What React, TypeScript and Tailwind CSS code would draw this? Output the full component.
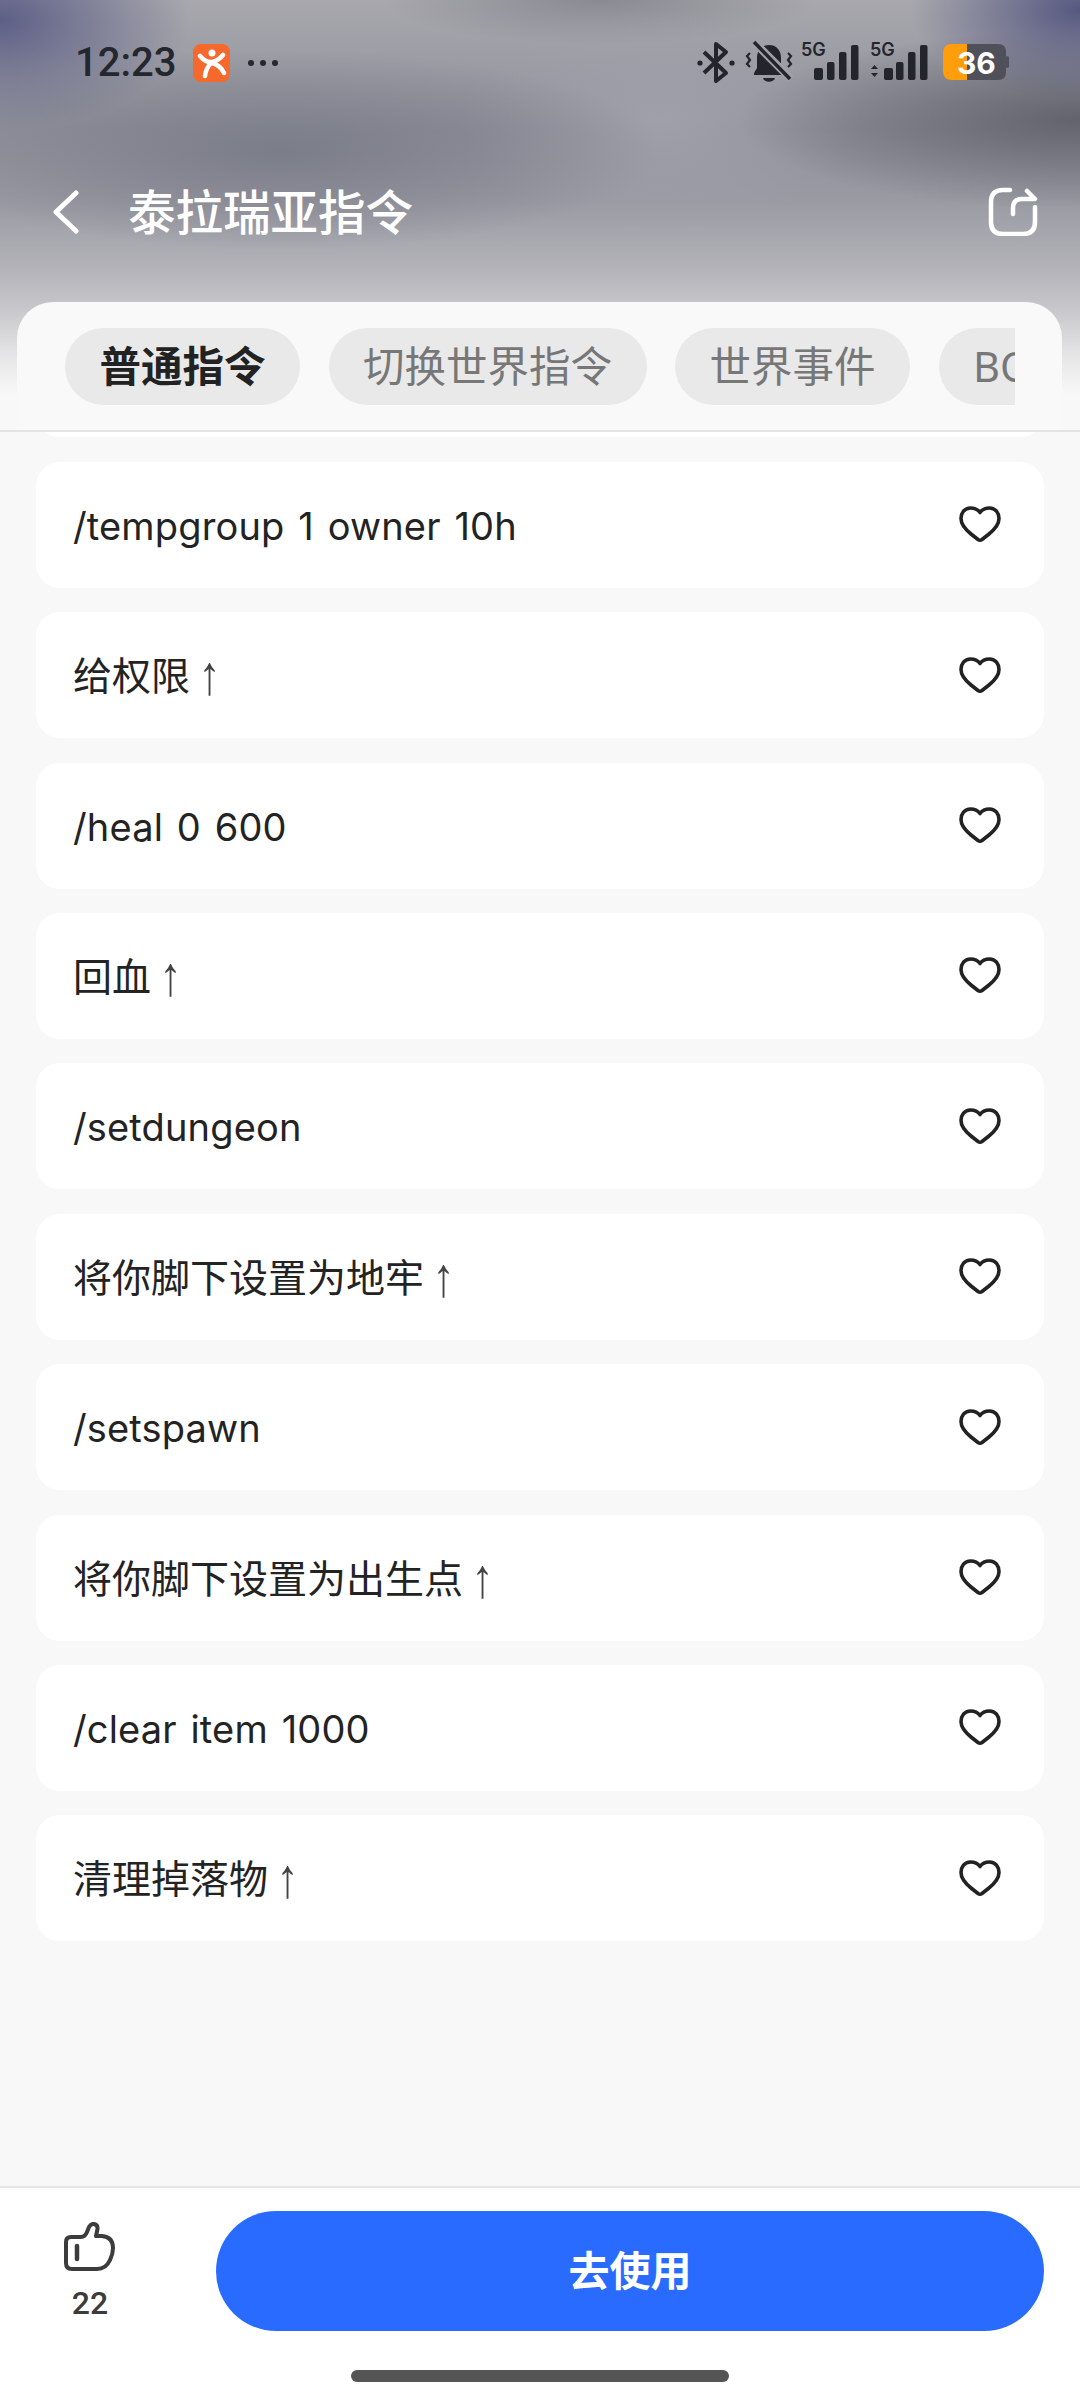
const rows = [
  "/tempgroup 1 owner 10h",
  "给权限",
  "/heal 0 600",
  "回血",
  "/setdungeon",
  "将你脚下设置为地牢",
  "/setspawn",
  "将你脚下设置为出生点",
  "/clear item 1000",
  "清理掉落物",
];

const font = "[font-family:'Noto_Sans','Noto_Sans_CJK_SC',sans-serif]";

function Heart() {
  return (
    <svg width="42" height="37" viewBox="0 0 42 37" fill="none" stroke="#222" strokeWidth="3.6" strokeLinejoin="round">
      <path d="M21 6.5C18.5 3 15 2 11.500 2 5.500 2 2 7 2 12.500 2 18.500 6.500 23.500 12 28l7 5.500q2 1.500 4 0l7-5.500c5.500-4.500 10-9.500 10-15.500C40 7 36.500 2 30.500 2 27 2 23.500 3 21 6.500Z" />
    </svg>
  );
}

function Row({ text }: { text: string }) {
  const latin = text.startsWith("/");
  return (
    <div className="h-[126px] shrink-0 rounded-[24px] bg-white pl-[37px] pr-[43px] flex items-center justify-between">
      {latin ? (
        <span className="mt-[2px] text-[38px] leading-[50px] text-[#232323] tracking-[0.15px] [word-spacing:3px] [font-family:Inter,sans-serif]">{text}</span>
      ) : (
        <span className="text-[39px] leading-[50px] text-[#232323] flex items-center">
          {text}
          <span className="ml-[9px] inline-block scale-x-[1.05] scale-y-[1.32] translate-y-[1px] text-[42px] leading-[50px] text-[#444] font-normal [font-family:'Liberation_Sans',sans-serif]">↑</span>
        </span>
      )}
      <Heart />
    </div>
  );
}

function StatusIcons() {
  const bars = (x: number[]) =>
    x.map((v, i) => {
      const tops = [68, 62, 52, 45];
      return <rect key={v} x={v} y={tops[i]} width={i === 0 ? 9 : 7.500} height={80 - tops[i]} rx="2" fill="#23252c" />;
    });
  return (
    <svg width="320" height="50" viewBox="695 38 320 50">
      <g fill="none" stroke="#23252c" strokeWidth="4" strokeLinejoin="round">
        <path d="M704 52l22 21-10 8V44l10 8-22 21" />
      </g>
      <circle cx="700" cy="63" r="2.600" fill="#23252c" />
      <circle cx="732" cy="63" r="2.600" fill="#23252c" />
      <path d="M769 45c-8 0-12 6-12 13v10l-3 5v2h30v-2l-3-5V58c0-7-4-13-12-13Z" fill="#23252c" />
      <path d="M763 78h12c-1 5-11 5-12 0Z" fill="#23252c" />
      <path d="M753 41l38 38" stroke="#a0a1a8" strokeWidth="8" />
      <path d="M754 42l36 37" stroke="#23252c" strokeWidth="3.500" />
      <path d="M750 53l-3 3 3 4-3 4 3 3M788 53l3 3-3 4 3 4-3 3" fill="none" stroke="#23252c" strokeWidth="2.200" />
      <text x="801" y="56" fontSize="18" fontWeight="600" fontFamily="Inter, sans-serif" fill="#23252c">5G</text>
      {bars([814, 827, 839, 851])}
      <text x="870" y="56" fontSize="18" fontWeight="600" fontFamily="Inter, sans-serif" fill="#23252c">5G</text>
      <path d="M871 69l3.500-4 3.500 4ZM871 73l3.500 4 3.500-4Z" fill="#23252c" />
      {bars([884, 896, 908, 920])}
      <path d="M967 44h31q8 0 8 8v20q0 8-8 8h-31Z" fill="#50505a" />
      <rect x="1006" y="56" width="3" height="12" rx="1.500" fill="#50505a" />
      <path d="M967 44h-15q-9 0-9 9v18q0 9 9 9h15Z" fill="#ff9d0a" />
      <text x="957" y="74" fontSize="30" fontWeight="700" fontFamily="Inter, sans-serif" fill="#fff">36</text>
    </svg>
  );
}

export default function App() {
  return (
    <div className={`${font} w-[1080px] h-[2401px] flex flex-col overflow-hidden bg-[#f8f8f8]`}>
      <header className="h-[432px] shrink-0 flex flex-col border-b-2 border-[#e4e4e4] bg-[radial-gradient(ellipse_190px_110px_at_0px_20px,#5d5f86,transparent),radial-gradient(ellipse_170px_90px_at_1080px_10px,#565881,transparent),radial-gradient(ellipse_340px_90px_at_1080px_120px,#62636c,transparent),radial-gradient(ellipse_380px_100px_at_280px_150px,#7b7d89,transparent),radial-gradient(ellipse_200px_110px_at_660px_120px,#9fa0a9,transparent),radial-gradient(ellipse_220px_45px_at_600px_0px,#8a8b92,transparent),linear-gradient(180deg,#a8a8ae_0px,#8f909a_130px,#9a9aa3_200px,#b3b3b9_270px,#c8c8cc_310px,#e8e8e9_360px,#f8f8f8_395px)]">
        <div className="h-[126px] shrink-0 pl-[75px] pr-[65px] flex items-center justify-between">
          <div className="flex items-center">
            <span className="text-[40px] leading-none font-medium text-[#25272e] [font-family:Roboto,sans-serif]">12:23</span>
            <div className="ml-[17px] w-[37px] h-[38px] rounded-[8px] bg-[#f5692c] flex items-center justify-center">
              <svg width="30" height="32" viewBox="0 0 30 32" fill="none" stroke="#fff" strokeWidth="4.500" strokeLinecap="round">
                <circle cx="15" cy="6" r="3.500" fill="#fff" stroke="none" />
                <path d="M3 9q6 7 12 6t11-7M14 16q-5 5-6 13M15 16q8 2 12 10" />
              </svg>
            </div>
            <div className="ml-[18px] flex gap-[6px]">
              <span className="w-[6px] h-[6px] rounded-full bg-[#25272e]" />
              <span className="w-[6px] h-[6px] rounded-full bg-[#25272e]" />
              <span className="w-[6px] h-[6px] rounded-full bg-[#25272e]" />
            </div>
          </div>
          <StatusIcons />
        </div>
        <div className="h-[176px] shrink-0 pl-[53px] pr-[42px] flex items-start justify-between">
          <div className="flex items-center mt-[62px] h-[48px]">
            <svg width="26" height="44" viewBox="0 0 26 44" fill="none" stroke="#fff" strokeWidth="5" strokeLinecap="round" strokeLinejoin="round">
              <path d="M23 3 3 22l20 19" />
            </svg>
            <h1 className="ml-[49px] text-[47.500px] leading-none font-medium text-white">泰拉瑞亚指令</h1>
          </div>
          <svg className="mt-[60px]" width="50" height="50" viewBox="0 0 50 50" fill="none" stroke="#fff" strokeWidth="4.500" strokeLinecap="round" strokeLinejoin="round">
            <path d="M22 4H15Q3 4 3 16v20q0 12 12 12h20q12 0 12-12V21" />
            <path d="M25 28v-6q0-9 9-9h12M39 5l8 8" />
          </svg>
        </div>
        <div className="flex-1 ml-[17px] mr-[18px] rounded-t-[36px] bg-[#f9f9f9] pl-[48px] pr-[47px] pt-[26px]">
          <div className="flex gap-[28.5px] overflow-hidden">
            <span className="h-[77px] shrink-0 px-[34.5px] rounded-full bg-[#e9e9e9] flex items-center text-[41.500px] font-semibold text-[#222]">普通指令</span>
            <span className="h-[77px] shrink-0 px-[34.5px] rounded-full bg-[#e9e9e9] flex items-center text-[41.500px] text-[#777]">切换世界指令</span>
            <span className="h-[77px] shrink-0 px-[34.5px] rounded-full bg-[#e9e9e9] flex items-center text-[41.500px] text-[#777]">世界事件</span>
            <span className="h-[77px] shrink-0 px-[34.5px] rounded-full bg-[#e9e9e9] flex items-center text-[41.500px] text-[#777]">BOSS指令</span>
          </div>
        </div>
      </header>
      <main className="flex-1 min-h-0 overflow-hidden px-[36px] flex flex-col gap-[24.4px]">
        <div className="h-[126px] shrink-0 -mt-[120.6px] rounded-[24px] bg-white" />
        {rows.map((r) => (
          <Row key={r} text={r} />
        ))}
      </main>
      <footer className="h-[215px] shrink-0 border-t-2 border-[#e6e6e6] bg-white flex flex-col items-center">
        <div className="w-full h-[146px] pt-[23px] pl-[64px] pr-[36px] flex items-start">
          <div className="w-[52px] flex flex-col items-center shrink-0 pt-[11px]">
            <svg width="52" height="50" viewBox="0 0 52 50" fill="none" stroke="#3c3c3c" strokeWidth="4" strokeLinecap="round" strokeLinejoin="round">
              <path d="M7 15h10q4 0 6-5l2-5q2-3.500 5-3 4 1 3.500 5L32 14h6q11 1 11 12 0 6-3 12-4 9-13 9H8q-6 0-6-6V20q0-5 5-5Z" />
              <path d="M13 24v13" strokeWidth="4.500" />
            </svg>
            <span className="mt-[12px] text-[32px] leading-[38px] font-medium text-[#3c3c3c] [font-family:Roboto,sans-serif]">22</span>
          </div>
          <button className="ml-[100px] flex-1 h-[120px] rounded-full bg-[#2a6bff] text-white text-[41px] font-semibold">去使用</button>
        </div>
        <div className="mt-[36px] w-[378px] h-[12px] rounded-full bg-[#555]" />
      </footer>
    </div>
  );
}
